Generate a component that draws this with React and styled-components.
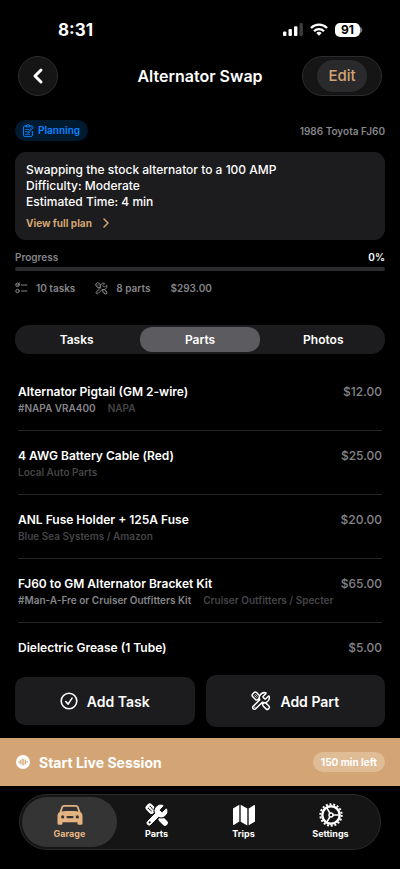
import React, { useState } from "react";
import styled, { createGlobalStyle } from "styled-components";

const parts = [
  { name: "Alternator Pigtail (GM 2-wire)", number: "#NAPA VRA400", vendor: "NAPA", price: "$12.00" },
  { name: "4 AWG Battery Cable (Red)", vendor: "Local Auto Parts", price: "$25.00" },
  { name: "ANL Fuse Holder + 125A Fuse", vendor: "Blue Sea Systems / Amazon", price: "$20.00" },
  {
    name: "FJ60 to GM Alternator Bracket Kit",
    number: "#Man-A-Fre or Cruiser Outfitters Kit",
    vendor: "Cruiser Outfitters / Specter",
    price: "$65.00",
  },
  { name: "Dielectric Grease (1 Tube)", price: "$5.00" },
];

const tabs = ["Tasks", "Parts", "Photos"];

const wrenchPath =
  "M14.7 6.3a1 1 0 0 0 0 1.4l1.6 1.6a1 1 0 0 0 1.4 0l3.106-3.105c.32-.322.863-.22.983.218a6 6 0 0 1-8.259 7.057l-7.91 7.91a1 1 0 0 1-2.999-3l7.91-7.91a6 6 0 0 1 7.057-8.259c.438.12.54.662.219.984z";

// outlined wrench crossed over a screwdriver
const ToolsIcon = ({ size, back }) => (
  <svg width={size} height={size} viewBox="0 0 24 24" fill={back} stroke="currentColor" strokeWidth="1.8">
    <g transform="rotate(45 12 12)">
      <rect x="7" y="11" width="9" height="2" />
      <rect x="-1" y="8.600" width="9" height="6.800" rx="2" />
      <path d="M1.5 11h4M1.5 13h4" strokeWidth="1" />
      <rect x="16" y="9.600" width="9" height="4.800" rx="2" />
    </g>
    <path d={wrenchPath} strokeLinejoin="round" />
    <circle cx="4.6" cy="19.4" r="0.7" fill="currentColor" stroke="none" />
  </svg>
);

const ToolsSolidIcon = () => (
  <svg width="24" height="24" viewBox="0 0 24 24" fill="currentColor">
    <g transform="rotate(45 12 12)">
      <rect x="6" y="10.8" width="11" height="2.4" />
      <rect x="-2" y="8.2" width="10" height="7.6" rx="2.4" />
      <path d="M0.5 10.7h5M0.5 13.3h5" stroke="#151515" strokeWidth="1" strokeDasharray="1.4 0.5" />
      <rect x="15.5" y="9.2" width="10.5" height="5.6" rx="2.2" />
    </g>
    <path d={wrenchPath} stroke="#151515" strokeWidth="3" />
    <path d={wrenchPath} stroke="currentColor" strokeWidth="1" strokeLinejoin="round" />
    <circle cx="4.7" cy="19.3" r="1.1" fill="#151515" />
  </svg>
);

const CarIcon = () => (
  <svg width="26" height="22" viewBox="0 0 26 22" fill="currentColor" fillRule="evenodd">
    <path d="M7.2 1h11.6c1.4 0 2.4.8 2.9 2.1l1.7 5c1.5.9 2.1 2.2 2.1 4v7.400a1.300 1.300 0 0 1-1.300 1.300h-2.400a1.300 1.300 0 0 1-1.300-1.300V18.200h-15v1.300a1.300 1.300 0 0 1-1.300 1.300H1.800A1.300 1.300 0 0 1 .5 19.500v-7.400c0-1.800.6-3.100 2.100-4l1.700-5C4.800 1.800 5.800 1 7.200 1zM7.300 2.700c-.7 0-1.200.4-1.400 1L4.700 7.400c5.500-.5 11.100-.5 16.600 0l-1.200-3.700c-.2-.6-.7-1-1.400-1zM5.700 11.300a1.600 1.600 0 1 0 0 3.200 1.600 1.600 0 0 0 0-3.200zM20.300 11.300a1.600 1.600 0 1 0 0 3.200 1.600 1.600 0 0 0 0-3.200zM10.600 11.900a1.200 1.200 0 0 0 0 2.400h4.800a1.200 1.200 0 0 0 0-2.400z" />
  </svg>
);

const MapIcon = () => (
  <svg width="24" height="22" viewBox="0 0 24 22" fill="currentColor">
    <path d="M1 4.600 7.300.8v16.800L2.200 20.800c-.7.400-1.200.1-1.200-.7z" />
    <path d="M8.700.7l6.600 3.700v17L8.700 17.700z" />
    <path d="M16.700 4.400 21.800 1.200c.7-.4 1.200-.1 1.200.7v15.500l-6.300 3.800z" />
  </svg>
);

const GearIcon = () => (
  <svg width="24" height="24" viewBox="0 0 24 24" fill="none" stroke="currentColor">
    <circle cx="12" cy="12" r="10.700" strokeWidth="2" strokeDasharray="2 1.735" />
    <circle cx="12" cy="12" r="8.700" strokeWidth="2.400" />
    <circle cx="12" cy="12" r="2" strokeWidth="1.500" />
    <path d="M14 12h6.500M11 10.300 7.700 4.600M11 13.700l-3.300 5.700" strokeWidth="1.600" />
  </svg>
);

const PlanIcon = () => (
  <svg width="11" height="13" viewBox="0 0 11 13" fill="none" stroke="currentColor" strokeLinecap="round">
    <path d="M7.500 2H9M2.800 2H1.700C1 2 .6 2.400.6 3v8.400c0 .6.400 1 1.100 1h6.600c.7 0 1.100-.4 1.100-1V7.500" />
    <path d="M3.200 1.500h.9a1 1 0 0 1 2 0H7v1.300H3.200z" />
    <path d="M10.200 3.600 6 8.800l-1.200.6.200-1.400 4.300-5zM2.500 5.500h3M2.500 7.500h1.500M2.500 10.300h4" strokeWidth="0.8" />
  </svg>
);

const ChecklistIcon = () => (
  <svg width="13" height="12" viewBox="0 0 13 12" fill="none" stroke="currentColor" strokeLinecap="round">
    <circle cx="2.500" cy="2.800" r="1.800" />
    <path d="m1.800 2.500.8.9L4.400.8M6.500 3h5.500M6.500 9h5.500" />
    <circle cx="2.500" cy="9" r="1.700" />
  </svg>
);

const App = () => {
  const [tab, setTab] = useState("Parts");

  return (
    <Screen>
      <GlobalStyle />
      <StatusBar>
        <Clock>8:31</Clock>
        <StatusIcons>
          <svg width="20" height="13" viewBox="0 0 20 13" fill="#fff">
            <rect x="0" y="8.500" width="3.400" height="4.500" rx="1" />
            <rect x="5.500" y="6" width="3.400" height="7" rx="1" />
            <rect x="11" y="3.300" width="3.400" height="9.700" rx="1" />
            <rect x="16.500" y="0" width="3.400" height="13" rx="1" fill="#3d3d3f" />
          </svg>
          <svg width="18" height="13" viewBox="0 0 18 13" fill="none" stroke="#fff" strokeWidth="2.300">
            <path d="M1 5a11.400 11.400 0 0 1 16 0" />
            <path d="M4 8.200a7 7 0 0 1 10 0" />
            <path d="M9 12.800 6.300 10a3.900 3.900 0 0 1 5.400 0z" fill="#fff" stroke="none" />
          </svg>
          <Battery>
            <BatteryLevel>91</BatteryLevel>
            <svg width="3" height="6" viewBox="0 0 3 6" fill="#7a7a7c">
              <path d="M0 0c3 .5 3 5.500 0 6z" />
            </svg>
          </Battery>
        </StatusIcons>
      </StatusBar>

      <Header>
        <BackButton aria-label="Back">
          <svg width="10" height="16" viewBox="0 0 10 16" fill="none" stroke="#fff" strokeWidth="3">
            <path d="M8 2 2 8l6 6" strokeLinecap="round" strokeLinejoin="round" />
          </svg>
        </BackButton>
        <Title>Alternator Swap</Title>
        <EditButton>
          <EditLabel>Edit</EditLabel>
        </EditButton>
      </Header>

      <Summary>
        <SpreadRow>
          <StatusChip>
            <PlanIcon />
            Planning
          </StatusChip>
          <Muted>1986 Toyota FJ60</Muted>
        </SpreadRow>

        <PlanCard>
          <p>Swapping the stock alternator to a 100 AMP</p>
          <p>Difficulty: Moderate</p>
          <p>Estimated Time: 4 min</p>
          <PlanLink href="#plan">
            View full plan
            <svg width="6" height="10" viewBox="0 0 6 10" fill="none" stroke="currentColor" strokeWidth="1.500">
              <path d="m1 1 4 4-4 4" strokeLinecap="round" strokeLinejoin="round" />
            </svg>
          </PlanLink>
        </PlanCard>

        <ProgressLabels>
          <Muted>Progress</Muted>
          <Percent>0%</Percent>
        </ProgressLabels>
        <Track role="progressbar" aria-label="Progress" aria-valuenow={0} aria-valuemin={0} aria-valuemax={100} />

        <Stats>
          <Stat>
            <ChecklistIcon />
            10 tasks
          </Stat>
          <Stat>
            <ToolsIcon size={13} back="#000" />8 parts
          </Stat>
          <Stat>$293.00</Stat>
        </Stats>
      </Summary>

      <Segments role="tablist">
        {tabs.map((name) => (
          <Segment key={name} role="tab" aria-selected={tab === name} $active={tab === name} onClick={() => setTab(name)}>
            {name}
          </Segment>
        ))}
      </Segments>

      <PartList>
        {parts.map((part) => (
          <PartRow key={part.name}>
            <PartLine>
              <PartName>{part.name}</PartName>
              <Price>{part.price}</Price>
            </PartLine>
            <PartMeta>
              {part.number && <PartNumber>{part.number}</PartNumber>}
              {part.vendor && <span>{part.vendor}</span>}
            </PartMeta>
          </PartRow>
        ))}
      </PartList>

      <Footer>
        <Actions>
          <ActionButton>
            <svg width="18" height="18" viewBox="0 0 18 18" fill="none" stroke="currentColor" strokeWidth="1.600">
              <circle cx="9" cy="9" r="7.800" />
              <path d="m5.800 9.500 2.300 2.600 4-6" strokeLinecap="round" strokeLinejoin="round" />
            </svg>
            Add Task
          </ActionButton>
          <ActionButton $tall>
            <ToolsIcon size={20} back="#1c1c1e" />
            Add Part
          </ActionButton>
        </Actions>

        <LiveBar>
          <svg width="14" height="14" viewBox="0 0 14 14">
            <circle cx="7" cy="7" r="7" fill="#fff" />
            <path
              d="M3 6.300v1.400M4.600 5.200v3.600M6.200 4v6M7.800 4v6M9.400 5.200v3.600M11 6.300v1.400"
              stroke="#d3a574"
              strokeLinecap="round"
            />
          </svg>
          <LiveLabel>Start Live Session</LiveLabel>
          <TimeLeft>150 min left</TimeLeft>
        </LiveBar>

        <NavBar>
          <NavItem href="#garage" $active>
            <CarIcon />
            Garage
          </NavItem>
          <NavItem href="#parts">
            <ToolsSolidIcon />
            Parts
          </NavItem>
          <NavItem href="#trips">
            <MapIcon />
            Trips
          </NavItem>
          <NavItem href="#settings">
            <GearIcon />
            Settings
          </NavItem>
        </NavBar>
      </Footer>
    </Screen>
  );
};

export default App;

const GlobalStyle = createGlobalStyle`
  * {
    box-sizing: border-box;
  }
  body {
    margin: 0;
    background: #000;
    color: #fff;
    font-family: Inter, "Liberation Sans", sans-serif;
  }
  h1, p, ul {
    margin: 0;
    padding: 0;
  }
  button {
    border: 0;
    padding: 0;
    background: none;
    color: inherit;
    font: inherit;
    cursor: pointer;
  }
  a {
    text-decoration: none;
  }
  svg {
    flex: none;
    overflow: visible;
  }
`;

const Screen = styled.div`
  display: flex;
  flex-direction: column;
  min-height: 100vh;
`;

const StatusBar = styled.div`
  display: flex;
  justify-content: space-between;
  align-items: center;
  height: 56px;
  padding: 3px 37px 0 58px;
`;

const Clock = styled.span`
  font-size: 17px;
  font-weight: 700;
`;

const StatusIcons = styled.div`
  display: flex;
  align-items: center;
  gap: 7px;
`;

const Battery = styled.div`
  display: flex;
  align-items: center;
`;

const BatteryLevel = styled.span`
  width: 25px;
  border-radius: 5px;
  background: #fff;
  color: #000;
  font-size: 12px;
  font-weight: 700;
  line-height: 14px;
  text-align: center;
`;

const Header = styled.header`
  display: grid;
  grid-template-columns: 80px 1fr 80px;
  align-items: center;
  padding: 0 18px;
`;

const BackButton = styled.button`
  display: flex;
  justify-content: center;
  align-items: center;
  width: 40px;
  height: 40px;
  border: 1px solid #2c2c2e;
  border-radius: 20px;
  background: #151515;
`;

const Title = styled.h1`
  font-size: 16px;
  font-weight: 600;
  text-align: center;
`;

const EditButton = styled.button`
  display: flex;
  justify-content: center;
  align-items: center;
  height: 40px;
  border: 1px solid #2c2c2e;
  border-radius: 20px;
  background: #151515;
`;

const EditLabel = styled.span`
  padding: 0 11px;
  border-radius: 16px;
  background: #2a2a2c;
  color: #d3a574;
  font-size: 15px;
  font-weight: 500;
  line-height: 32px;
`;

const Summary = styled.section`
  padding: 24px 15px 0;
`;

const SpreadRow = styled.div`
  display: flex;
  justify-content: space-between;
  align-items: center;
`;

const StatusChip = styled.span`
  display: flex;
  align-items: center;
  gap: 4px;
  padding: 0 8px;
  border-radius: 11px;
  background: #001a30;
  color: #0a84ff;
  font-size: 10px;
  font-weight: 600;
  line-height: 21px;
`;

const Muted = styled.span`
  color: #85858a;
  font-size: 10px;
  font-weight: 600;
  line-height: 14px;
`;

const PlanCard = styled.div`
  margin-top: 11px;
  padding: 10px 11px;
  border-radius: 11px;
  background: #1c1c1e;
  font-size: 12px;
  font-weight: 500;
  line-height: 16px;
`;

const PlanLink = styled.a`
  display: flex;
  align-items: center;
  gap: 11px;
  margin-top: 6px;
  color: #d3a574;
  font-size: 10px;
  font-weight: 700;
  line-height: 14px;
`;

const ProgressLabels = styled(SpreadRow)`
  margin-top: 10px;
`;

const Percent = styled.span`
  font-size: 10px;
  font-weight: 600;
  line-height: 14px;
`;

const Track = styled.div`
  height: 4px;
  margin-top: 3px;
  border-radius: 2px;
  background: #2c2c2e;
`;

const Stats = styled.div`
  display: flex;
  gap: 20px;
  margin-top: 10px;
`;

const Stat = styled.span`
  display: flex;
  align-items: center;
  gap: 8px;
  color: #85858a;
  font-size: 10px;
  font-weight: 600;
  line-height: 14px;
`;

const Segments = styled.div`
  display: grid;
  grid-template-columns: repeat(3, 1fr);
  gap: 4px;
  margin: 30px 15px 0;
  padding: 2px;
  border-radius: 14px;
  background: #1c1c1e;
`;

const Segment = styled.button`
  border-radius: 12px;
  background: ${(props) => (props.$active ? "#5b5b60" : "transparent")};
  font-size: 12px;
  font-weight: 600;
  line-height: 25px;
`;

const PartList = styled.ul`
  padding: 13px 18px 0;
  list-style: none;
`;

const PartRow = styled.li`
  padding: 17px 0 14px;

  &:not(:last-child) {
    border-bottom: 1px solid #232325;
  }
  &:last-child {
    padding-bottom: 0;
  }
`;

const PartLine = styled.div`
  display: flex;
  justify-content: space-between;
  align-items: center;
  line-height: 16px;
`;

const PartName = styled.span`
  font-size: 12px;
  font-weight: 600;
`;

const Price = styled.span`
  color: #85858a;
  font-size: 12px;
  font-weight: 500;
`;

const PartMeta = styled.div`
  display: flex;
  gap: 12px;
  color: #454547;
  font-size: 10px;
  font-weight: 600;
  line-height: 16px;
`;

const PartNumber = styled.span`
  color: #85858a;
`;

const Footer = styled.footer`
  margin-top: auto;
  padding-bottom: 19px;
`;

const Actions = styled.div`
  display: grid;
  grid-template-columns: 1fr 1fr;
  align-items: center;
  gap: 11px;
  padding: 0 15px;
`;

const ActionButton = styled.button`
  display: flex;
  justify-content: center;
  align-items: center;
  gap: 9px;
  height: ${(props) => (props.$tall ? "52px" : "48px")};
  border-radius: 10px;
  background: #1c1c1e;
  font-size: 14px;
  font-weight: 600;
`;

const LiveBar = styled.button`
  display: flex;
  align-items: center;
  gap: 9px;
  width: 100%;
  height: 48px;
  margin-top: 11px;
  padding: 0 15px 0 16px;
  background: #d3a574;
  text-align: left;
`;

const LiveLabel = styled.span`
  flex: 1;
  font-size: 14px;
  font-weight: 700;
`;

const TimeLeft = styled.span`
  padding: 0 8px;
  border-radius: 10px;
  background: #dfbc96;
  font-size: 10px;
  font-weight: 700;
  line-height: 20px;
`;

const NavBar = styled.nav`
  display: grid;
  grid-template-columns: repeat(4, 1fr);
  margin: 8px 19px 0;
  padding: 2px 6px;
  border: 1px solid #2a2a2c;
  border-radius: 28px;
  background: #151515;
`;

// the highlight reaches a little past its own column
const NavItem = styled.a`
  display: grid;
  grid-template-rows: 24px 12px;
  row-gap: 1px;
  justify-items: center;
  align-items: center;
  height: 50px;
  margin: 0 -4px;
  padding: 6px 0 7px;
  border-radius: 25px;
  background: ${(props) => (props.$active ? "#343434" : "transparent")};
  color: ${(props) => (props.$active ? "#e3b482" : "#fff")};
  font-size: 9px;
  font-weight: 700;
  line-height: 12px;
`;
